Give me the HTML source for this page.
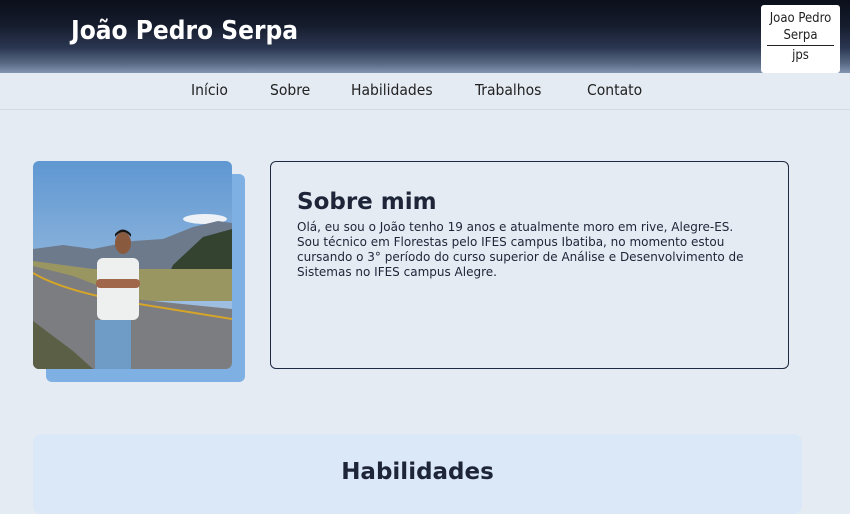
<!DOCTYPE html>
<html><head><meta charset="utf-8"><style>
*{margin:0;padding:0;box-sizing:border-box}
body{width:850px;height:499px;overflow:hidden;background:#e4ebf3;font-family:"DejaVu Sans","Liberation Sans",sans-serif;position:relative}
.hdr{position:absolute;left:0;top:0;width:850px;height:73px;background:linear-gradient(#0b0f1b 0%,#151c2d 35%,#2a3650 65%,#5b6c88 88%,#8396b0 100%)}
.hdr h1{position:absolute;left:71px;top:16px;color:#fff;font:bold 26px "DejaVu Sans Condensed","DejaVu Sans",sans-serif;letter-spacing:0}
.logo{position:absolute;left:761px;top:5px;width:79px;height:68px;background:#fff;border-radius:3px;text-align:center;font:13px "DejaVu Sans Condensed","DejaVu Sans",sans-serif;color:#222;line-height:17px;padding-top:5px}
.logo .l{width:67px;height:1px;background:#222;margin:1px auto 1px}
.nav{position:absolute;top:73px;left:0;width:850px;height:37px;border-bottom:1px solid #d4dbe4}
.nav span{position:absolute;top:8px;font:15.5px "DejaVu Sans Condensed","DejaVu Sans",sans-serif;color:#222}
.shadow{position:absolute;left:46px;top:174px;width:199px;height:208px;background:#7fb0e3;border-radius:6px}
.photo{position:absolute;left:33px;top:161px;width:199px;height:208px;border-radius:6px;overflow:hidden}
.card{position:absolute;left:270px;top:161px;width:519px;height:208px;border:1px solid #1e2a44;border-radius:6px}
.card h2{position:absolute;left:26px;top:27px;font:bold 23px "DejaVu Sans",sans-serif;color:#1e2538}
.card p{position:absolute;left:26px;top:58px;width:452px;font:12px/15px "DejaVu Sans",sans-serif;color:#1e2538}
.hab{position:absolute;left:33px;top:434px;width:769px;height:80px;background:#dbe8f8;border-radius:8px}
.hab h2{text-align:center;margin-top:25px;font:bold 23px "DejaVu Sans",sans-serif;color:#1e2538}
</style></head><body>
<div class="hdr"><h1>João Pedro Serpa</h1><div class="logo">Joao Pedro<br>Serpa<div class="l"></div>jps</div></div>
<div class="nav"><span style="left:191px">Início</span><span style="left:270px">Sobre</span><span style="left:351px">Habilidades</span><span style="left:475px">Trabalhos</span><span style="left:587px">Contato</span></div>
<div class="shadow"></div>
<div class="photo"><svg width="199" height="208" viewBox="0 0 199 208">
<defs><linearGradient id="s" x1="0" y1="0" x2="0" y2="1"><stop offset="0" stop-color="#5f97d2"/><stop offset="1" stop-color="#b9d0e6"/></linearGradient></defs>
<rect width="199" height="208" fill="url(#s)"/>
<ellipse cx="172" cy="58" rx="22" ry="5" fill="#eef2f7"/>
<polygon points="0,88 30,84 60,88 100,80 130,78 160,66 185,60 199,62 199,110 0,110" fill="#6d7a8c"/>
<polygon points="140,104 170,76 199,68 199,125 130,125" fill="#34432f"/>
<polygon points="0,100 60,108 199,108 199,140 0,140" fill="#9a9662"/>
<polygon points="0,105 40,115 100,138 199,148 199,208 0,208" fill="#7c7d80"/>
<path d="M0,112 Q30,130 100,142 L199,158" stroke="#d5a52a" stroke-width="2" fill="none"/>
<polygon points="0,160 40,190 60,208 0,208" fill="#5b5f45"/>
<rect x="64" y="97" width="42" height="62" rx="6" fill="#eef0f0"/>
<ellipse cx="90" cy="82" rx="8" ry="11" fill="#8a5a3e"/>
<path d="M82,76 Q90,66 98,76 L98,73 Q90,64 82,73Z" fill="#1a1614"/>
<rect x="63" y="118" width="44" height="9" rx="4" fill="#a0674a"/>
<rect x="62" y="159" width="36" height="49" fill="#6e9cc6"/>
</svg></div>
<div class="card"><h2>Sobre mim</h2><p>Olá, eu sou o João tenho 19 anos e atualmente moro em rive, Alegre-ES. Sou técnico em Florestas pelo IFES campus Ibatiba, no momento estou cursando o 3° período do curso superior de Análise e Desenvolvimento de Sistemas no IFES campus Alegre.</p></div>
<div class="hab"><h2>Habilidades</h2></div>
</body></html>
